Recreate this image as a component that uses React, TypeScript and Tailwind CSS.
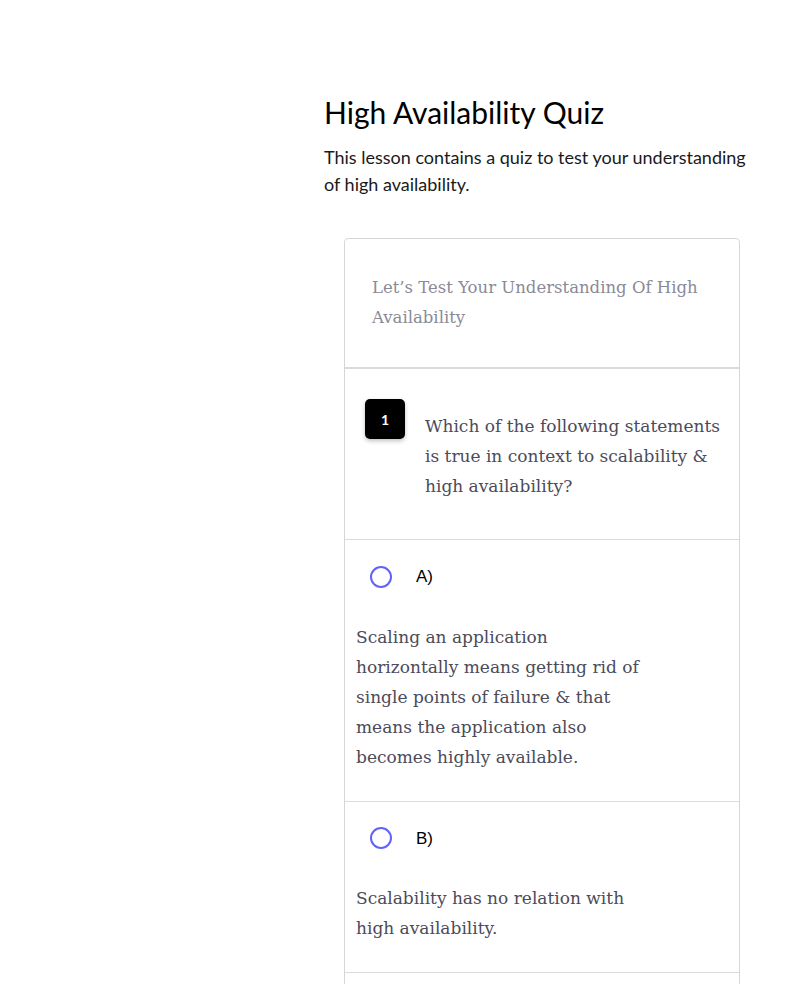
import { useState } from 'react'

interface Option {
  label: string
  text: string
}

const options: Option[] = [
  {
    label: 'A)',
    text: 'Scaling an application horizontally means getting rid of single points of failure & that means the application also becomes highly available.',
  },
  {
    label: 'B)',
    text: 'Scalability has no relation with high availability.',
  },
  {
    label: 'C)',
    text: 'Scaling vertically makes the application highly available.',
  },
]

const serif = { fontFamily: '"DejaVu Serif", "Liberation Serif", serif' }

export default function App() {
  const [selected, setSelected] = useState<number | null>(null)

  return (
    <div className="min-h-screen bg-white" style={{ fontFamily: 'Lato, "Open Sans", sans-serif' }}>
      <div className="pl-[324px] pt-[94px] pr-[40px]">
        <h1 className="text-[30px] leading-[36px] text-black">High Availability Quiz</h1>
        <p className="mt-[14px] text-[18px] leading-[27px] text-[#1a1a1a]">
          This lesson contains a quiz to test your understanding of high availability.
        </p>

        <div className="ml-[20px] mt-[40px] w-[396px] rounded-t-[4px] border border-[#d6d6da]">
          <div className="border-b-2 border-[#dadadd] px-[27px] pt-[34px] pb-[34px]">
            <h2 className="text-[16.5px] leading-[30px] text-[#8a8a96]" style={serif}>
              Let’s Test Your Understanding Of High Availability
            </h2>
          </div>

          <div className="flex border-b border-[#dcdcdf] pl-[20px] pr-[16px] pt-[30px] pb-[38px]">
            <div className="flex h-[40px] w-[40px] shrink-0 items-center justify-center rounded-[5px] bg-black text-[14px] font-bold text-white shadow-[0_2px_4px_rgba(0,0,0,0.25)]">
              1
            </div>
            <p className="ml-[20px] mt-[12px] text-[17px] leading-[30px] text-[#4b4b5a]" style={serif}>
              Which of the following statements is true in context to scalability &amp; high availability?
            </p>
          </div>

          {options.map((o, i) => (
            <button
              key={o.label}
              onClick={() => setSelected(i)}
              className="block w-full border-b border-[#dcdcdf] px-[11px] pt-[24px] pb-[29px] text-left"
            >
              <div className="flex items-center pl-[14px]">
                <span
                  className={`h-[22px] w-[22px] rounded-full border-2 border-[#6262fa] ${
                    selected === i ? 'bg-[#6262fa]' : 'bg-white'
                  }`}
                />
                <span
                  className="ml-[24px] text-[17px] text-black"
                  style={{ fontFamily: '"Liberation Sans", Arial, sans-serif' }}
                >
                  {o.label}
                </span>
              </div>
              <p className="mt-[32px] max-w-[290px] text-[17px] leading-[30px] text-[#4b4b5a]" style={serif}>
                {o.text}
              </p>
            </button>
          ))}
        </div>
      </div>
    </div>
  )
}
